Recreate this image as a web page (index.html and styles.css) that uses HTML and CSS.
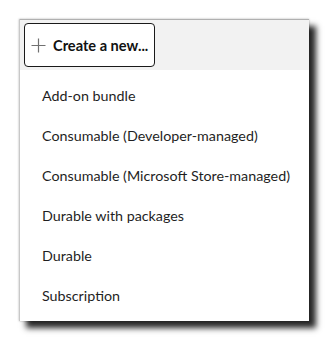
FILE: index.html
```html
<!DOCTYPE html>
<html>
<head>
<meta charset="utf-8">
<link rel="stylesheet" href="styles.css">
</head>
<body>
<div class="panel">
  <div class="header">
    <button class="create-btn">
      <svg class="plus" width="15" height="15" viewBox="0 0 15 15"><path d="M7.5 0.5V14.5M0.5 7.5H14.5" stroke="#707070" stroke-width="1.2" fill="none"/></svg>
      <span>Create a new...</span>
    </button>
  </div>
  <ul class="menu">
    <li>Add-on bundle</li>
    <li>Consumable (Developer-managed)</li>
    <li>Consumable (Microsoft Store-managed)</li>
    <li>Durable with packages</li>
    <li>Durable</li>
    <li>Subscription</li>
  </ul>
</div>
</body>
</html>
```
FILE: styles.css
```css
html, body {
  margin: 0;
  padding: 0;
  background: #ffffff;
}
body {
  min-height: 341px;
  box-sizing: border-box;
  padding: 19px 0 0 19px;
  font-family: "Lato", "Noto Sans", sans-serif;
  color: #1f1f1f;
}
.panel {
  width: 290px;
  height: 302px;
  background: #ffffff;
  border-left: 1px solid #c8c8c8;
  box-sizing: border-box;
  box-shadow: 0 0 2px rgba(0,0,0,0.3), 7px 7px 6px rgba(0,0,0,0.85);
  display: flex;
  flex-direction: column;
}
.header {
  height: 51px;
  background: #f2f2f2;
  padding: 3px 0 0 4px;
  box-sizing: border-box;
  border-top: 1px solid #b0b0b0;
}
.create-btn {
  width: 131px;
  height: 44px;
  box-sizing: border-box;
  border: 1px solid #1a1a1a;
  border-radius: 4px;
  background: #ffffff;
  display: flex;
  align-items: center;
  gap: 7px;
  padding: 0 0 0 6px;
  font-family: inherit;
  font-size: 14.6px;
  font-weight: 700;
  color: #111;
  white-space: nowrap;
}
.plus {
  flex: none;
}
.menu {
  list-style: none;
  margin: 0;
  padding: 6px 0 0 0;
}
.menu li {
  height: 40px;
  line-height: 40px;
  padding-left: 22px;
  font-size: 14.3px;
}
```
